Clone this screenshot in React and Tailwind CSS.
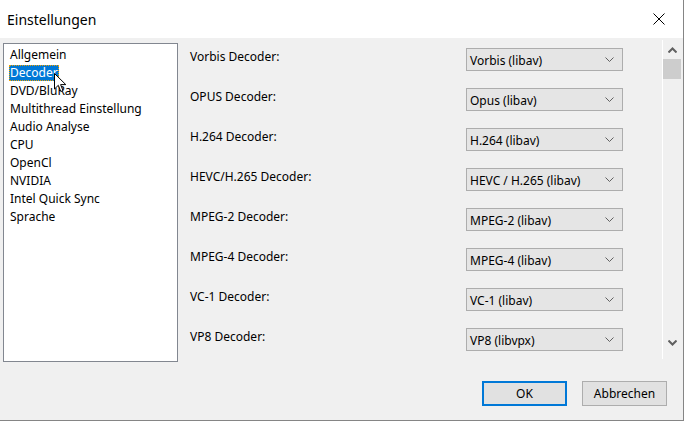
import React from 'react';

const categories = [
  'Allgemein',
  'Decoder',
  'DVD/BluRay',
  'Multithread Einstellung',
  'Audio Analyse',
  'CPU',
  'OpenCl',
  'NVIDIA',
  'Intel Quick Sync',
  'Sprache',
];

const decoders = [
  { label: 'Vorbis Decoder:', value: 'Vorbis (libav)' },
  { label: 'OPUS Decoder:', value: 'Opus (libav)' },
  { label: 'H.264 Decoder:', value: 'H.264 (libav)' },
  { label: 'HEVC/H.265 Decoder:', value: 'HEVC / H.265 (libav)' },
  { label: 'MPEG-2 Decoder:', value: 'MPEG-2 (libav)' },
  { label: 'MPEG-4 Decoder:', value: 'MPEG-4 (libav)' },
  { label: 'VC-1 Decoder:', value: 'VC-1 (libav)' },
  { label: 'VP8 Decoder:', value: 'VP8 (libvpx)' },
];

function Chevron({ up = false, width = 1, className = '' }) {
  return (
    <svg width="9" height="6" viewBox="0 0 9 6" className={className}>
      <path
        d={up ? 'M0.5 5.5 L4.5 1.5 L8.5 5.5' : 'M0.5 0.5 L4.5 4.5 L8.5 0.5'}
        fill="none"
        stroke="currentColor"
        strokeWidth={width}
      />
    </svg>
  );
}

function ComboBox({ value }) {
  return (
    <div className="flex h-[23px] w-[157px] items-center justify-between border border-[#adadad] bg-[#e5e5e5] pl-[3px] pr-[8px]">
      <span className="pt-[2px] leading-[16px]">{value}</span>
      <Chevron className="text-[#606060]" />
    </div>
  );
}

function Cursor() {
  return (
    <svg width="13" height="20" viewBox="0 0 13 20" className="absolute left-[50px] top-[29px]">
      <path
        d="M0.5 0.5 L0.5 16 L4.3 12.3 L6.8 18.5 L9 17.6 L6.6 11.6 L11.8 11.6 Z"
        fill="#fff"
        stroke="#000"
        strokeWidth="1"
        strokeLinejoin="round"
      />
    </svg>
  );
}

export default function App() {
  return (
    <div
      className="h-[422px] w-[686px] overflow-hidden bg-white text-[12px] text-black"
      style={{ fontFamily: '"Noto Sans", "Liberation Sans", sans-serif' }}
    >
      <div className="flex h-[421px] w-[684px] flex-col border-b border-r border-[#858585]">
        <div className="flex h-[38px] items-center justify-between bg-white pl-[7px] pr-[18px]">
          <span className="text-[14px]">Einstellungen</span>
          <svg width="12" height="12" viewBox="0 0 12 12">
            <path d="M0.5 0.5 L11.5 11.5 M11.5 0.5 L0.5 11.5" stroke="#000" strokeWidth="1" />
          </svg>
        </div>

        <div className="flex flex-1 flex-col bg-[#f0f0f0]">
          <div className="flex">
            <div className="relative ml-[3px] mt-[5px] h-[319px] w-[175px] border border-[#828790] bg-white pt-[2px]">
              {categories.map((name) => (
                <div key={name} className="flex h-[18px] items-center pl-[5px] leading-[16px]">
                  {name === 'Decoder' ? (
                    <span className="flex h-[16px] items-center border border-dotted border-[#f0a000] bg-[#0078d7] text-white">
                      {name}
                    </span>
                  ) : (
                    <span className="px-px">{name}</span>
                  )}
                </div>
              ))}
              <Cursor />
            </div>

            <div className="ml-[2px] mt-[2px] flex h-[319px] flex-1">
              <div className="flex-1 pt-[8px]">
                {decoders.map((row) => (
                  <div key={row.label} className="flex h-[40px] items-start">
                    <span className="mt-[1px] w-[286px] pl-[10px] leading-[16px]">{row.label}</span>
                    <ComboBox value={row.value} />
                  </div>
                ))}
              </div>
              <div className="mr-[2px] flex w-[19px] flex-col border-l border-white">
                <div className="flex h-[17px] items-center justify-center pt-[2px] text-[#606060]">
                  <Chevron up width={2} />
                </div>
                <div className="mt-[2px] h-[20px] bg-[#cdcdcd]" />
                <div className="flex-1" />
                <div className="mb-[8px] flex h-[17px] items-center justify-center text-[#606060]">
                  <Chevron width={2} />
                </div>
              </div>
            </div>
          </div>

          <div className="mt-[19px] flex justify-end gap-[15px] pr-[16px]">
            <button className="h-[25px] w-[85px] border-2 border-[#0078d7] bg-[#e1e1e1]">OK</button>
            <button className="h-[25px] w-[85px] border border-[#adadad] bg-[#e1e1e1]">Abbrechen</button>
          </div>
        </div>
      </div>
    </div>
  );
}
